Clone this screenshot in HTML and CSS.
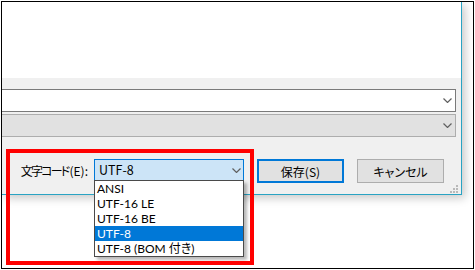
FILE: index.html
```html
<!DOCTYPE html>
<html lang="ja">
<head>
    <meta charset="UTF-8">
    <meta name="viewport" content="width=device-width, initial-scale=1.0">
    <title>文字コードの選択</title>
    <link rel="stylesheet" href="styles.css">
</head>
<body>
    <div class="frame">
        <div class="dialog">
            <div class="preview"></div>
            <div class="panel">
                <div class="combo field">
                    <svg class="chev" width="9" height="5" viewBox="0 0 9 5"><polyline points="0.5,0.5 4.5,4.5 8.5,0.5" /></svg>
                </div>
                <div class="combo field off">
                    <svg class="chev" width="9" height="5" viewBox="0 0 9 5"><polyline points="0.5,0.5 4.5,4.5 8.5,0.5" /></svg>
                </div>
                <div class="actions">
                    <label class="label"><span class="kana">文字コード</span>(E):</label>
                    <div class="combo open">
                        <span class="value">UTF-8</span>
                        <svg class="chev" width="9" height="5" viewBox="0 0 9 5"><polyline points="0.5,0.5 4.5,4.5 8.5,0.5" /></svg>
                        <ul class="list">
                            <li>ANSI</li>
                            <li>UTF-16 LE</li>
                            <li>UTF-16 BE</li>
                            <li class="selected">UTF-8</li>
                            <li>UTF-8 (BOM 付き)</li>
                        </ul>
                    </div>
                    <button class="btn default">保存(S)</button>
                    <button class="btn">キャンセル</button>
                </div>
            </div>
            <!-- resize grip -->
            <svg class="grip" width="9" height="9" viewBox="0 0 9 9">
                <rect x="6" y="0" width="2" height="2" />
                <rect x="3" y="3" width="2" height="2" />
                <rect x="6" y="3" width="2" height="2" />
                <rect x="0" y="6" width="2" height="2" />
                <rect x="3" y="6" width="2" height="2" />
                <rect x="6" y="6" width="2" height="2" />
            </svg>
        </div>
        <div class="callout"></div>
    </div>
</body>
</html>
```

FILE: styles.css
```css
* {
    box-sizing: border-box;
}
body {
    margin: 0;
    background: #fff;
    font-family: "Noto Sans CJK JP", "Noto Sans", sans-serif;
    font-size: 12px;
    font-feature-settings: "palt";
    color: #000;
}
.frame {
    position: relative;
    width: 473px;
    height: 268px;
    margin: 1px;
    border: 1px solid #000;
    overflow: hidden;
    background: #fff;
}
.dialog {
    position: relative;
    width: 460px;
    height: 193px;
    border-right: 1px solid #29a3c3;
    border-bottom: 1px solid #29a3c3;
    box-shadow: 3px 3px 9px rgba(0, 0, 0, 0.22);
    background: #f0f0f0;
}
.preview {
    height: 76px;
    background: #fff;
}
.panel {
    padding: 11px 5px 0 0;
}
.combo {
    position: relative;
    display: flex;
    align-items: center;
    justify-content: flex-end;
    border: 1px solid #7a7a7a;
    background: #fff;
}
.combo .chev {
    fill: none;
    stroke: #606060;
    stroke-width: 1.2;
}
.field {
    height: 23px;
    border-left: none;
    padding-right: 3px;
}
.field.off {
    margin-top: 2px;
    background: #e1e1e1;
    border-color: #adadad;
}
.actions {
    display: flex;
    align-items: flex-start;
    gap: 13px;
    margin-top: 22px;
}
.label {
    width: 86px;
    margin-right: -7px;
    line-height: 24px;
    text-align: right;
    white-space: nowrap;
}
.label .kana {
    letter-spacing: -1.8px;
    margin-right: 1px;
}
.combo.open {
    width: 150px;
    height: 22px;
    padding: 0 2px 0 4px;
    justify-content: space-between;
    border-color: #0078d7;
    background: #cce4f7;
}
.value {
    line-height: 20px;
    font-size: 12.5px;
}
.list {
    position: absolute;
    top: 100%;
    left: -1px;
    width: 150px;
    margin: 0;
    padding: 0;
    list-style: none;
    background: #fff;
    border: 1px solid #4a4a4a;
    box-shadow: 3px 3px 3px rgba(0, 0, 0, 0.28);
    font-family: Lato, "Noto Sans CJK JP", sans-serif;
}
.list li {
    height: 15px;
    line-height: 15px;
    padding-left: 2px;
    white-space: nowrap;
}
.list li.selected {
    background: #0078d7;
    color: #fff;
}
.btn {
    width: 87px;
    height: 24px;
    padding: 0;
    font: inherit;
    color: #000;
    background: #e1e1e1;
    border: 1px solid #adadad;
}
.btn.default {
    border: 2px solid #0078d7;
}
.grip {
    position: absolute;
    right: 2px;
    bottom: 0;
    fill: #b9b9b9;
}
.callout {
    position: absolute;
    left: 4px;
    top: 147px;
    width: 248px;
    height: 116px;
    border: 4px solid #ff0000;
}
```
